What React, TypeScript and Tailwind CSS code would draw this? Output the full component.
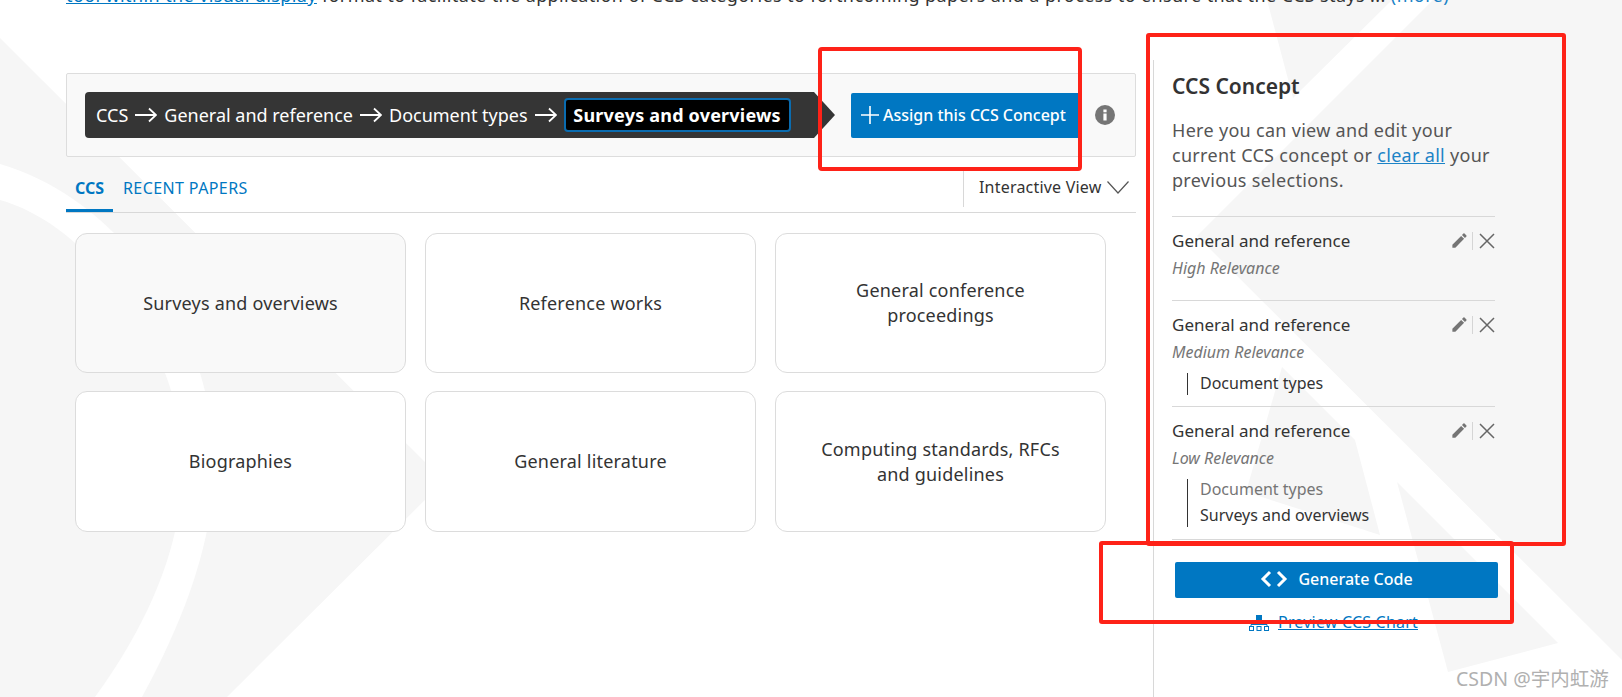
import type { ReactNode } from "react";
import { MdEdit } from "react-icons/md";

const cards = [
  { label: "Surveys and overviews", active: true },
  { label: "Reference works" },
  { label: "General conference proceedings" },
  { label: "Biographies" },
  { label: "General literature" },
  { label: "Computing standards, RFCs and guidelines" },
];

function Backdrop() {
  return (
    <svg className="absolute inset-0" width="1622" height="697" viewBox="0 0 1622 697">
      <path d="M0 38 L444 481 L227 697 L0 697 Z" fill="#f6f6f6" />
      <path
        d="M0 164 C90 190 165 270 200 373 C222 445 228 540 142 697 L95 697 C195 560 195 450 165 373 C130 290 70 220 0 200 Z"
        fill="#ffffff"
      />
      <path d="M1267 0 L1293 98 L1392 0 Z" fill="#f6f6f6" />
      <path d="M1433 0 L1622 0 L1622 660 L1197 236 Z" fill="#f6f6f6" />
      <path d="M1282 367 L1355 440 L1380 535 L1246 492 Z" fill="#f6f6f6" />
      <path d="M1397 482 L1448 672 L1558 643 Z" fill="#f6f6f6" />
    </svg>
  );
}

function Arrow() {
  return (
    <svg width="22" height="16" viewBox="0 0 22 16" fill="none" stroke="#ffffff" strokeWidth="1.8" className="shrink-0">
      <path d="M0 8 H21 M14 1.5 L21 8 L14 14.5" />
    </svg>
  );
}

function CloseIcon() {
  return (
    <svg width="16" height="16" viewBox="0 0 16 16" fill="none" stroke="#666666" strokeWidth="1.5">
      <path d="M1 1 L15 15 M15 1 L1 15" />
    </svg>
  );
}

function ItemActions() {
  return (
    <div className="flex items-center">
      <MdEdit size={19} className="text-[#757575]" />
      <span className="ml-[3px] mr-[6px] h-[18px] w-px bg-[#d5d5d5]" />
      <CloseIcon />
    </div>
  );
}

function ConceptItem({ relevance, children, className }: { relevance: string; children?: ReactNode; className: string }) {
  return (
    <div className={`border-t border-[#d8d8d8] pt-[11px] ${className}`}>
      <div className="flex h-[25px] items-center justify-between text-[17px]">
        <span>General and reference</span>
        <ItemActions />
      </div>
      <div className="mt-[3px] italic text-[#757575]">{relevance}</div>
      {children}
    </div>
  );
}

export default function App() {
  return (
    <div className="relative h-[697px] w-[1622px] overflow-hidden bg-white font-['Noto_Sans',sans-serif] text-[16px] leading-[25px] text-[#333333]">
      <Backdrop />

      <div className="relative flex h-[60px] items-start pl-[66px]">
        <p className="-mt-[17px] whitespace-nowrap text-[18px] tracking-[0.39px]">
          <a className="text-[#0077c2] underline">tool within the visual display</a> format to facilitate the application
          of CCS categories to forthcoming papers and a process to ensure that the CCS stays ...{" "}
          <a className="text-[#1c83c6]">(more)</a>
        </p>
      </div>

      <div className="relative flex pl-[66px]">
        <main className="w-[1070px] pt-[13px]">
          <div className="flex h-[84px] items-start rounded-[2px] border border-[#dddddd] bg-[#f9f9f9] pl-[18px] pt-[18px]">
            <div className="flex h-[46px] w-[729px] items-center rounded-l-[4px] bg-[#353535] pl-[11px] text-[18px] text-white">
              <span>CCS</span>
              <span className="mx-[7px]"><Arrow /></span>
              <span>General and reference</span>
              <span className="mx-[7px]"><Arrow /></span>
              <span>Document types</span>
              <span className="mx-[7px]"><Arrow /></span>
              <span className="flex h-[34px] w-[227px] items-center justify-center rounded-[4px] border-2 border-[#0a6cb0] bg-black font-bold tracking-[0.2px]">
                Surveys and overviews
              </span>
            </div>
            <div className="h-0 w-0 border-y-[23px] border-l-[21px] border-y-transparent border-l-[#353535]" />
            <button className="ml-[16px] mt-px flex h-[45px] w-[229px] items-center rounded-[2px] bg-[#0077c2] pl-[10px] text-[16px] font-medium text-white">
              <svg width="18" height="18" viewBox="0 0 18 18" stroke="#ffffff" strokeWidth="1.6" className="mr-[4px] -mt-[2px]">
                <path d="M9 0 V18 M0 9 H18" />
              </svg>
              Assign this CCS Concept
            </button>
            <svg width="20" height="20" viewBox="0 0 20 20" className="ml-[15px] mt-[13px]">
              <circle cx="10" cy="10" r="10" fill="#757575" />
              <rect x="8.4" y="8.5" width="3.2" height="7" fill="#ffffff" />
              <rect x="8.4" y="4.5" width="3.2" height="2.8" fill="#ffffff" />
            </svg>
          </div>

          <div className="flex h-[56px] items-end justify-between border-b border-[#d8d8d8]">
            <div className="flex items-end text-[#0077c2]">
              <div className="flex h-[40px] w-[47px] items-start justify-center border-b-[3px] border-[#0077c2] pt-[4px] font-bold">
                CCS
              </div>
              <div className="ml-[10px] h-[40px] pt-[4px] tracking-[0.4px]">RECENT PAPERS</div>
            </div>
            <div className="mb-[5px] flex h-[37px] w-[173px] items-center border-l border-[#d8d8d8] pl-[15px] pb-[3px] tracking-[0.2px]">
              <span>Interactive View</span>
              <svg width="22" height="13" viewBox="0 0 22 13" fill="none" stroke="#555555" strokeWidth="1.2" className="ml-[6px]">
                <path d="M0.5 0.5 L11 12 L21.5 0.5" />
              </svg>
            </div>
          </div>

          <div className="ml-[9px] mt-[20px] grid grid-cols-[331px_331px_331px] grid-rows-[140px_141px] gap-x-[19px] gap-y-[18px] text-[18px] tracking-[0.2px]">
            {cards.map((card) => (
              <div
                key={card.label}
                className={`flex items-center justify-center rounded-[12px] border border-[#dcdcdc] px-[40px] text-center ${
                  card.active ? "bg-[#f9f9f9]" : "bg-white"
                }`}
              >
                {card.label}
              </div>
            ))}
          </div>
        </main>

        <aside className="ml-[17px] h-[637px] w-[345px] border-l border-[#d8d8d8] pl-[18px] pr-[3px] pt-[14px]">
          <h2 className="h-[24px] text-[21px] font-semibold leading-[24px]">CCS Concept</h2>
          <p className="mt-[20px] w-[320px] text-[18px] tracking-[0.3px] text-[#555555]">
            Here you can view and edit your current CCS concept or{" "}
            <a className="text-[#1c83c6] underline">clear all</a> your previous selections.
          </p>

          <div className="mt-[23px]">
            <ConceptItem relevance="High Relevance" className="pb-[19px]" />
            <ConceptItem relevance="Medium Relevance" className="pb-[11px]">
              <div className="ml-[15px] mt-[8px] flex h-[22px] items-center border-l border-[#333333] pb-[2px] pl-[12px]">
                Document types
              </div>
            </ConceptItem>
            <ConceptItem relevance="Low Relevance" className="pb-[12px]">
              <div className="ml-[15px] mt-[8px] flex h-[48px] flex-col justify-center border-l border-[#333333] pb-[2px] pl-[12px] leading-[26px]">
                <span className="text-[#757575]">Document types</span>
                <span>Surveys and overviews</span>
              </div>
            </ConceptItem>
            <div className="border-t border-[#d8d8d8]" />
          </div>

          <button className="ml-[3px] mt-[22px] flex h-[36px] w-[323px] items-center justify-center rounded-[2px] bg-[#0077c2] pb-[2px] font-medium text-white">
            <svg width="28" height="18" viewBox="0 0 28 18" fill="none" stroke="#ffffff" strokeWidth="3" className="mr-[10px]">
              <path d="M10 2 L3 9 L10 16 M18 2 L25 9 L18 16" />
            </svg>
            Generate Code
          </button>
          <div className="ml-[3px] mt-[12px] flex w-[317px] items-center justify-center tracking-[0.2px] text-[#0077c2]">
            <svg width="20" height="16" viewBox="0 0 20 16" fill="none" stroke="#0077c2" strokeWidth="1" className="mr-[9px]">
              <rect x="7" y="0" width="6" height="6" fill="#0077c2" stroke="none" />
              <path d="M10 6 V9 M2 9.5 H18 M2 9.5 V11 M18 9.5 V11" />
              <rect x="0.5" y="11.5" width="4" height="4" />
              <rect x="8" y="11.5" width="4" height="4" />
              <rect x="15.5" y="11.5" width="4" height="4" />
            </svg>
            <a className="underline">Preview CCS Chart</a>
          </div>
        </aside>
      </div>

      {/* annotation boxes drawn over the screenshot */}
      <div className="absolute left-[818px] top-[47px] h-[124px] w-[264px] rounded-[4px] border-4 border-[#fe2218]" />
      <div className="absolute left-[1146px] top-[33px] h-[513px] w-[420px] rounded-[3px] border-4 border-[#fe2218]" />
      <div className="absolute left-[1099px] top-[541px] h-[83px] w-[415px] rounded-[3px] border-4 border-[#fe2218]" />

      <div className="absolute left-[1456px] top-[666px] whitespace-nowrap font-['Noto_Sans','Noto_Sans_CJK_SC',sans-serif] text-[19.5px] text-[#b0b0b0]">
        CSDN @宇内虹游
      </div>
    </div>
  );
}
